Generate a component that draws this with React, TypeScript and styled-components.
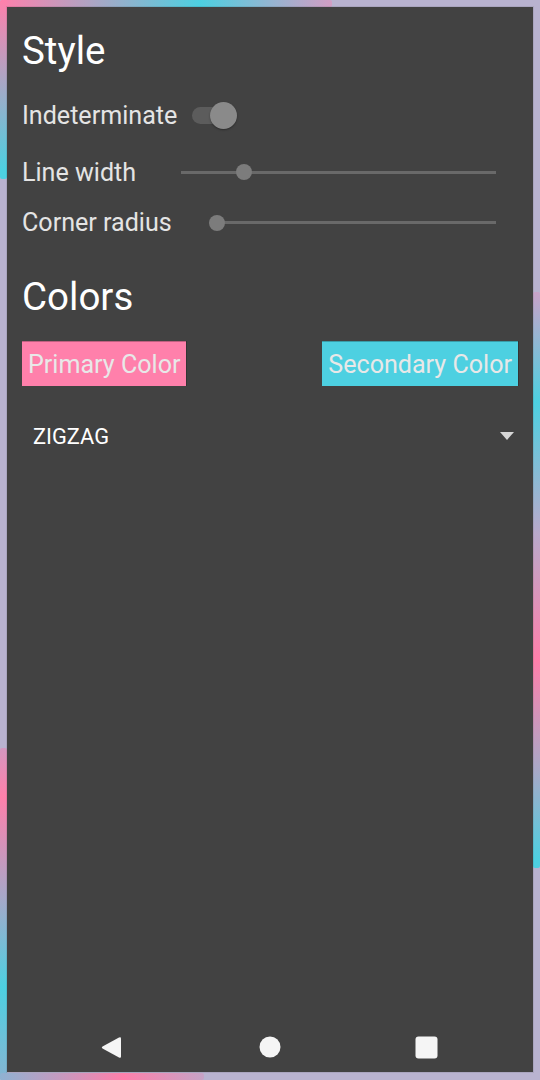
import React from "react";
import styled, { createGlobalStyle } from "styled-components";

const Global = createGlobalStyle`
  html, body { margin: 0; padding: 0; background: #b9b3d0; }
  body { font-family: Roboto, "Noto Sans", "Liberation Sans", sans-serif; }
  * { box-sizing: border-box; }
`;

const Frame = styled.div`
  position: relative;
  width: 540px;
  height: 1080px;
  padding: 7px 7px 8px 7px;
  background: #b9b3d0;
  overflow: hidden;
`;

const Glow = styled.div<{ $x: number; $y: number; $w: number; $h: number; $bg: string }>`
  position: absolute;
  left: ${(p) => p.$x}px;
  top: ${(p) => p.$y}px;
  width: ${(p) => p.$w}px;
  height: ${(p) => p.$h}px;
  background: ${(p) => p.$bg};
  border-radius: 2px;
`;

const Panel = styled.div`
  position: relative;
  z-index: 1;
  height: 100%;
  background: #424242;
  display: flex;
  flex-direction: column;
  padding: 0 15px;
  box-shadow: 0 0 0 1px rgba(0, 0, 0, 0.08);
`;

const Heading = styled.h1<{ $mt: number }>`
  margin: ${(p) => p.$mt}px 0 0 0;
  font-size: 38.5px;
  line-height: 44px;
  height: 44px;
  font-weight: 400;
  color: #ffffff;
`;

const Row = styled.div<{ $mt: number; $h: number }>`
  display: flex;
  align-items: center;
  margin-top: ${(p) => p.$mt}px;
  height: ${(p) => p.$h}px;
`;

const Label = styled.span`
  font-size: 25.1px;
  line-height: 29px;
  color: #e4e4e4;
  white-space: nowrap;
`;

const SwitchBox = styled.div`
  position: relative;
  margin-left: 15px;
  width: 45px;
  height: 28px;
  display: flex;
  align-items: center;
`;

const SwitchTrack = styled.div`
  width: 37px;
  height: 17px;
  border-radius: 9px;
  background: #5c5c5c;
`;

const SwitchThumb = styled.div`
  position: absolute;
  right: 0;
  top: 1px;
  width: 27px;
  height: 27px;
  border-radius: 50%;
  background: #8a8a8a;
  box-shadow: 0 1px 2px rgba(0, 0, 0, 0.35);
`;

const SliderBox = styled.div`
  position: relative;
  flex: 1;
  margin-left: 45px;
  margin-right: 22px;
  height: 16px;
  display: flex;
  align-items: center;
`;

const SliderTrack = styled.div`
  width: 100%;
  height: 3px;
  background: #696969;
`;

const SliderThumb = styled.div`
  position: absolute;
  top: 0;
  width: 16px;
  height: 16px;
  margin-left: -8px;
  border-radius: 50%;
  background: #7c7c7c;
`;

const ButtonRow = styled.div`
  display: flex;
  justify-content: space-between;
  margin-top: 22px;
`;

const ColorButton = styled.button<{ $bg: string }>`
  height: 45px;
  padding: 1px 6px 0 6px;
  border: none;
  border-top: 1px solid rgba(0, 0, 0, 0.25);
  box-shadow: 1px 0 0 rgba(0, 0, 0, 0.2);
  background: ${(p) => p.$bg};
  color: #e8e8e8;
  font-family: Roboto, "Noto Sans", sans-serif;
  font-size: 25.1px;
  line-height: 43px;
  white-space: nowrap;
`;

const Dropdown = styled.div`
  display: flex;
  align-items: center;
  justify-content: space-between;
  margin-top: 26px;
  height: 48px;
  padding: 0 4px 0 11px;
`;

const DropText = styled.span`
  font-size: 21.8px;
  color: #ffffff;
`;

const NavBar = styled.div`
  margin-top: auto;
  height: 50px;
  display: flex;
  justify-content: center;
  align-items: center;
`;

const NavSlot = styled.div`
  width: 156px;
  display: flex;
  justify-content: center;
  align-items: center;
`;

const Slider = ({ value }: { value: number }) => (
  <SliderBox>
    <SliderTrack />
    <SliderThumb style={{ left: `${value}%` }} />
  </SliderBox>
);

const PINK = "#ff80ab";
const CYAN = "#4dd0e1";

export default function App() {
  return (
    <>
      <Global />
      <Frame>
        <Glow $x={0} $y={0} $w={332} $h={7} $bg={`linear-gradient(90deg, ${PINK} 0px, ${CYAN} 200px, #d29ec4 332px)`} />
        <Glow $x={0} $y={0} $w={7} $h={179} $bg={`linear-gradient(180deg, ${PINK} 0px, ${CYAN} 170px, ${CYAN} 179px)`} />
        <Glow $x={0} $y={748} $w={7} $h={332} $bg={`linear-gradient(180deg, #d497bf 0px, ${PINK} 49px, #a6a8c9 150px, ${CYAN} 239px, #86b4d2 332px)`} />
        <Glow $x={0} $y={1073} $w={204} $h={7} $bg={`linear-gradient(90deg, #8fb2d2 0px, ${PINK} 123px, #c6a3c6 204px)`} />
        <Glow $x={533} $y={292} $w={7} $h={576} $bg={`linear-gradient(180deg, #c9a3c9 0px, ${CYAN} 110px, #b8aacb 240px, ${PINK} 368px, #a7a9c8 480px, ${CYAN} 568px)`} />
        <Panel>
          <Heading $mt={22}>Style</Heading>
          <Row $mt={18} $h={48}>
            <Label>Indeterminate</Label>
            <SwitchBox>
              <SwitchTrack />
              <SwitchThumb />
            </SwitchBox>
          </Row>
          <Row $mt={8} $h={50}>
            <Label>Line width</Label>
            <Slider value={20} />
          </Row>
          <Row $mt={0} $h={51}>
            <Label>Corner radius</Label>
            <Slider value={0} />
          </Row>
          <Heading $mt={27}>Colors</Heading>
          <ButtonRow>
            <ColorButton $bg={PINK}>Primary Color</ColorButton>
            <ColorButton $bg={CYAN}>Secondary Color</ColorButton>
          </ButtonRow>
          <Dropdown>
            <DropText>ZIGZAG</DropText>
            <svg width="14" height="8" viewBox="0 0 14 8">
              <path d="M0 0 L14 0 L7 8 Z" fill="#d6d6d6" />
            </svg>
          </Dropdown>
          <NavBar>
            <NavSlot>
              <svg width="22" height="25" viewBox="0 0 22 25" style={{ marginLeft: -6 }}>
                <path d="M19 2.5 Q21 1.5 21 3.5 L21 21.5 Q21 23.5 19 22.5 L2.5 13.5 Q1 12.5 2.5 11.5 Z" fill="#f5f5f5" />
              </svg>
            </NavSlot>
            <NavSlot>
              <svg width="22" height="22" viewBox="0 0 22 22">
                <circle cx="11" cy="11" r="10.5" fill="#f5f5f5" />
              </svg>
            </NavSlot>
            <NavSlot>
              <svg width="23" height="23" viewBox="0 0 23 23">
                <rect x="0.5" y="0.5" width="22" height="22" rx="3" fill="#f5f5f5" />
              </svg>
            </NavSlot>
          </NavBar>
        </Panel>
      </Frame>
    </>
  );
}
